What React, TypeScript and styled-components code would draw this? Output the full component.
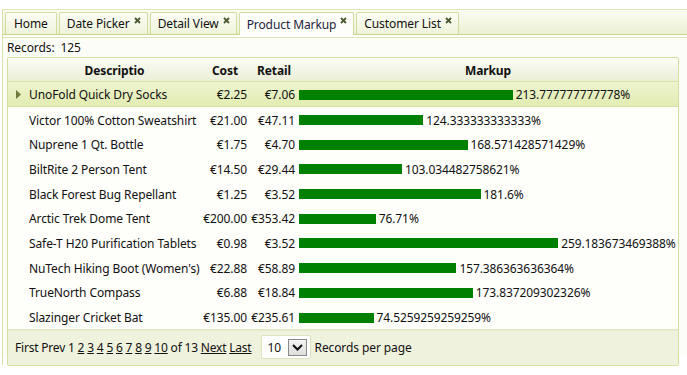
import React from "react";
import styled, { createGlobalStyle } from "styled-components";

const GlobalStyle = createGlobalStyle`
  html, body {
    margin: 0;
    padding: 0;
    background: #ffffff;
  }
  body {
    font-family: "Noto Sans", "Open Sans", sans-serif;
    font-size: 12px;
    letter-spacing: -0.1px;
    color: #111111;
  }
`;

type Product = {
  name: string;
  cost: string;
  retail: string;
  markup: number;
  label: string;
};

const products: Product[] = [
  { name: "UnoFold Quick Dry Socks", cost: "€2.25", retail: "€7.06", markup: 213.777777777778, label: "213.777777777778%" },
  { name: "Victor 100% Cotton Sweatshirt", cost: "€21.00", retail: "€47.11", markup: 124.333333333333, label: "124.333333333333%" },
  { name: "Nuprene 1 Qt. Bottle", cost: "€1.75", retail: "€4.70", markup: 168.571428571429, label: "168.571428571429%" },
  { name: "BiltRite 2 Person Tent", cost: "€14.50", retail: "€29.44", markup: 103.034482758621, label: "103.034482758621%" },
  { name: "Black Forest Bug Repellant", cost: "€1.25", retail: "€3.52", markup: 181.6, label: "181.6%" },
  { name: "Arctic Trek Dome Tent", cost: "€200.00", retail: "€353.42", markup: 76.71, label: "76.71%" },
  { name: "Safe-T H20 Purification Tablets", cost: "€0.98", retail: "€3.52", markup: 259.183673469388, label: "259.183673469388%" },
  { name: "NuTech Hiking Boot (Women's)", cost: "€22.88", retail: "€58.89", markup: 157.386363636364, label: "157.386363636364%" },
  { name: "TrueNorth Compass", cost: "€6.88", retail: "€18.84", markup: 173.837209302326, label: "173.837209302326%" },
  { name: "Slazinger Cricket Bat", cost: "€135.00", retail: "€235.61", markup: 74.5259259259259, label: "74.5259259259259%" },
];

const tabs = [
  { title: "Home", closable: false },
  { title: "Date Picker", closable: true },
  { title: "Detail View", closable: true },
  { title: "Product Markup", closable: true, active: true },
  { title: "Customer List", closable: true },
];

const Page = styled.div`
  width: 687px;
  height: 375px;
  padding-top: 9px;
  box-sizing: border-box;
  background: #ffffff;
`;

const Shell = styled.div`
  margin-left: 2px;
  border-left: 1px solid #d6e2ac;
  height: 356px;
`;

const TabStrip = styled.div`
  display: flex;
  align-items: flex-end;
  gap: 2px;
  height: 26px;
  padding-left: 2px;
  box-sizing: border-box;
  border-top: 1px solid #dbe6b4;
  border-bottom: 1px solid #c5d785;
  background: linear-gradient(#fbfcf3, #ebf1d3);
`;

const Tab = styled.div<{ $active?: boolean; $closable?: boolean }>`
  position: relative;
  display: flex;
  align-items: center;
  height: ${(p) => (p.$active ? 23 : 22)}px;
  margin-bottom: ${(p) => (p.$active ? -1 : 0)}px;
  padding: 0 ${(p) => (p.$closable ? 17 : 8)}px 0 ${(p) => (p.$closable ? 7 : 8)}px;
  box-sizing: border-box;
  border: 1px solid #cfdd9c;
  border-bottom: none;
  border-radius: 2px 2px 0 0;
  background: ${(p) =>
    p.$active ? "#fdfdf9" : "linear-gradient(#fcfdf5, #eef3da)"};
  color: ${(p) => (p.$active ? "#1d1d3a" : "#111111")};
  white-space: nowrap;
`;

const CloseMark = styled.svg`
  position: absolute;
  top: 4px;
  right: 6px;
`;

const Panel = styled.div`
  margin-top: 2px;
  border-top: 1px solid #dbe5b8;
  background: #fdfdf8;
  padding: 0 8px 0 4px;
  height: 318px;
`;

const RecordsLabel = styled.div`
  height: 19px;
  line-height: 20px;
  white-space: pre;
`;

const Grid = styled.div`
  border: 1px solid #d3df9f;
  border-radius: 2px;
  background: #fefefb;
  overflow: hidden;
`;

type RowKind = "header" | "selected" | "plain";

const Row = styled.div<{ $kind?: RowKind }>`
  display: grid;
  grid-template-columns: 21px 171px 50px 48px 1fr;
  align-items: center;
  height: ${(p) => (p.$kind === "header" ? "24px" : "24.7px")};
  padding-top: ${(p) => (p.$kind === "header" ? 1 : 2)}px;
  box-sizing: border-box;
  background: ${(p) =>
    p.$kind === "header"
      ? "linear-gradient(#fbfcf4, #eaefd7)"
      : p.$kind === "selected"
      ? "linear-gradient(#eef4cf, #e2ecb1)"
      : "transparent"};
  border-bottom: ${(p) =>
    p.$kind === "header" || p.$kind === "selected"
      ? "1px solid #d6e2a4"
      : "none"};
  font-weight: ${(p) => (p.$kind === "header" ? 700 : 400)};
`;

const Cell = styled.div<{ $align?: "left" | "right" | "center" }>`
  text-align: ${(p) => p.$align ?? "left"};
  white-space: nowrap;
  overflow: hidden;
  padding-right: ${(p) => (p.$align === "right" ? 3 : 0)}px;
`;

const Indicator = styled.div`
  display: flex;
  justify-content: center;
`;

const MarkupCell = styled.div`
  display: flex;
  align-items: center;
  gap: 3px;
  padding-left: 1px;
  white-space: nowrap;
`;

const Bar = styled.div`
  height: 10px;
  background: #008000;
`;

const Footer = styled.div`
  display: flex;
  align-items: center;
  height: 35px;
  padding-left: 7px;
  border-top: 1px solid #dfe7c1;
  box-shadow: inset 0 1px 0 #e6ecce;
  background: #eff2dd;
`;

const Pager = styled.div`
  white-space: pre;
  letter-spacing: -0.2px;
`;

const PageLink = styled.span`
  text-decoration: underline;
`;

const SizeBox = styled.div`
  display: flex;
  align-items: center;
  justify-content: space-between;
  width: 50px;
  height: 24px;
  margin-left: 9px;
  padding: 0 3px 0 6px;
  box-sizing: border-box;
  border: 1px solid #dce3c0;
  border-radius: 2px;
  background: #ffffff;
`;

const DropButton = styled.div`
  display: flex;
  align-items: center;
  justify-content: center;
  width: 19px;
  height: 17px;
  box-sizing: border-box;
  border: 1px solid #8a8a8a;
  background: linear-gradient(#f4f4f4, #dedede);
`;

const PerPage = styled.span`
  margin-left: 4px;
`;

const pages = [2, 3, 4, 5, 6, 7, 8, 9, 10];

export default function App() {
  return (
    <Page>
      <GlobalStyle />
      <Shell>
        <TabStrip>
          {tabs.map((t) => (
            <Tab key={t.title} $active={t.active} $closable={t.closable}>
              {t.title}
              {t.closable && (
                <CloseMark width="7" height="7" viewBox="0 0 7 7">
                  <path
                    d="M1 1 L6 6 M6 1 L1 6"
                    stroke="#4b5a2e"
                    strokeWidth="1.8"
                  />
                </CloseMark>
              )}
            </Tab>
          ))}
        </TabStrip>
        <Panel>
          <RecordsLabel>{"Records:  125"}</RecordsLabel>
          <Grid>
            <Row $kind="header">
              <Cell />
              <Cell $align="center">Descriptio</Cell>
              <Cell $align="center">Cost</Cell>
              <Cell $align="center">Retail</Cell>
              <Cell $align="center">Markup</Cell>
            </Row>
            {products.map((p, i) => (
              <Row key={p.name} $kind={i === 0 ? "selected" : "plain"}>
                <Indicator>
                  {i === 0 && (
                    <svg width="5" height="9" viewBox="0 0 5 9">
                      <path d="M0 0 L5 4.5 L0 9 Z" fill="#6c7a3c" />
                    </svg>
                  )}
                </Indicator>
                <Cell>{p.name}</Cell>
                <Cell $align="right">{p.cost}</Cell>
                <Cell $align="right">{p.retail}</Cell>
                <MarkupCell>
                  <Bar style={{ width: `${p.markup}px` }} />
                  <span>{p.label}</span>
                </MarkupCell>
              </Row>
            ))}
            <Footer>
              <Pager>
                {"First Prev 1 "}
                {pages.map((n) => (
                  <React.Fragment key={n}>
                    <PageLink>{n}</PageLink>{" "}
                  </React.Fragment>
                ))}
                {"of 13 "}
                <PageLink>Next</PageLink> <PageLink>Last</PageLink>
              </Pager>
              <SizeBox>
                <span>10</span>
                <DropButton>
                  <svg width="11" height="7" viewBox="0 0 11 7">
                    <path
                      d="M1 1 L5.5 5.5 L10 1"
                      fill="none"
                      stroke="#111"
                      strokeWidth="2"
                    />
                  </svg>
                </DropButton>
              </SizeBox>
              <PerPage>Records per page</PerPage>
            </Footer>
          </Grid>
        </Panel>
      </Shell>
    </Page>
  );
}
